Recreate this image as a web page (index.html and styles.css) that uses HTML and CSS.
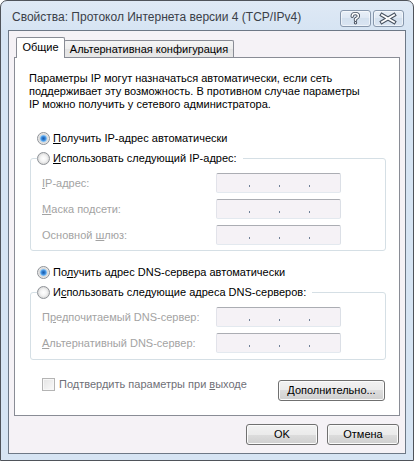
FILE: index.html
```html
<!DOCTYPE html>
<html lang="ru">
<head>
<meta charset="utf-8">
<title>Свойства: Протокол Интернета версии 4 (TCP/IPv4)</title>
<link rel="stylesheet" href="styles.css">
</head>
<body>
<div class="window">
  <div class="titlebar">
    <div class="title">Свойства: Протокол Интернета версии 4 (TCP/IPv4)</div>
    <div class="tbtns">
      <div class="tbtn">
        <svg width="31" height="17" viewBox="0 0 31 17">
          <path d="M12.2 6.2 C12.2 4.3 13.6 3.6 15.3 3.6 C17.1 3.6 18.4 4.5 18.4 6 C18.4 7.5 17.2 8 16 8.6 L15.5 9 L15.5 10.3" fill="none" stroke="#4a5462" stroke-width="3.4" stroke-linecap="round" stroke-linejoin="round"/>
          <circle cx="15.5" cy="12.8" r="1.7" fill="#4a5462"/>
          <path d="M12.2 6.2 C12.2 4.3 13.6 3.6 15.3 3.6 C17.1 3.6 18.4 4.5 18.4 6 C18.4 7.5 17.2 8 16 8.6 L15.5 9 L15.5 10.3" fill="none" stroke="#ffffff" stroke-width="1.5" stroke-linecap="round" stroke-linejoin="round"/>
          <circle cx="15.5" cy="12.8" r="0.7" fill="#ffffff"/>
        </svg>
      </div>
      <div class="tbtn">
        <svg width="31" height="17" viewBox="0 0 31 17">
          <path d="M9 5 L21 12 M21 5 L9 12" fill="none" stroke="#4a5462" stroke-width="4" stroke-linecap="square"/>
          <path d="M9 5 L21 12 M21 5 L9 12" fill="none" stroke="#ffffff" stroke-width="1.9" stroke-linecap="square"/>
        </svg>
      </div>
    </div>
  </div>

  <div class="client">
    <div class="tabs">
      <div class="tab tab-active">Общие</div>
      <div class="tab tab-inactive">Альтернативная конфигурация</div>
    </div>

    <div class="panel">
      <p class="desc">Параметры IP могут назначаться автоматически, если сеть<br>поддерживает эту возможность. В противном случае параметры<br>IP можно получить у сетевого администратора.</p>

      <div class="rrow rrow-first">
        <span class="radio radio-on"></span>
        <span class="rlabel"><u>П</u>олучить IP-адрес автоматически</span>
      </div>
      <fieldset class="group">
        <legend class="legend">
          <div class="rrow rrow-legend">
            <span class="radio"></span>
            <span class="rlabel"><u>И</u>спользовать следующий IP-адрес:</span>
          </div>
        </legend>
        <div class="field">
          <span class="flabel"><u>I</u>P-адрес:</span>
          <span class="ipbox"><i class="dot"></i><i class="dot"></i><i class="dot"></i></span>
        </div>
        <div class="field">
          <span class="flabel"><u>М</u>аска подсети:</span>
          <span class="ipbox"><i class="dot"></i><i class="dot"></i><i class="dot"></i></span>
        </div>
        <div class="field">
          <span class="flabel">Основной <u>ш</u>люз:</span>
          <span class="ipbox"><i class="dot"></i><i class="dot"></i><i class="dot"></i></span>
        </div>
      </fieldset>

      <div class="rrow rrow-dns">
        <span class="radio radio-on"></span>
        <span class="rlabel">По<u>л</u>учить адрес DNS-сервера автоматически</span>
      </div>
      <fieldset class="group group-dns">
        <legend class="legend">
          <div class="rrow rrow-legend">
            <span class="radio"></span>
            <span class="rlabel">И<u>с</u>пользовать следующие адреса DNS-серверов:</span>
          </div>
        </legend>
        <div class="field">
          <span class="flabel">П<u>р</u>едпочитаемый DNS-сервер:</span>
          <span class="ipbox"><i class="dot"></i><i class="dot"></i><i class="dot"></i></span>
        </div>
        <div class="field">
          <span class="flabel"><u>А</u>льтернативный DNS-сервер:</span>
          <span class="ipbox"><i class="dot"></i><i class="dot"></i><i class="dot"></i></span>
        </div>
      </fieldset>

      <div class="checkrow">
        <div class="check">
          <span class="checkbox"></span>
          <span class="clabel">Подтвердить параметры при <u>в</u>ыходе</span>
        </div>
        <div class="btn btn-adv"><span><u>Д</u>ополнительно...</span></div>
      </div>
    </div>

    <div class="footer">
      <div class="btn btn-dlg">OK</div>
      <div class="btn btn-dlg">Отмена</div>
    </div>
  </div>
</div>
</body>
</html>
```

FILE: styles.css
```css
* {
  box-sizing: border-box;
}

html,
body {
  margin: 0;
  padding: 0;
}

body {
  width: 414px;
  height: 461px;
  overflow: hidden;
  background: #ffffff;
  font-family: "Liberation Sans", Arial, sans-serif;
  font-size: 11px;
  color: #000000;
}

u {
  text-decoration: underline;
  text-underline-offset: 1px;
}

.window {
  width: 414px;
  height: 461px;
  border: 1px solid #4f535a;
  border-radius: 7px 7px 0 0;
  background: linear-gradient(#dfe9f5, #d6e4f3 30px, #d6e4f3);
  padding: 0 7px 6px 7px;
  display: flex;
  flex-direction: column;
}

/* ---------- title bar ---------- */
.titlebar {
  height: 29px;
  flex: none;
  display: flex;
  justify-content: space-between;
  padding: 0 2px 0 4px;
}

.title {
  padding-top: 8px;
  line-height: 16px;
  font-size: 12px;
  color: #3a4048;
  white-space: nowrap;
}

.tbtns {
  display: flex;
  gap: 2px;
  margin-top: 9px;
}

.tbtn {
  width: 31px;
  height: 17px;
  border: 1px solid #8797ac;
  border-radius: 3px;
  background: linear-gradient(#e9f0f8, #dde7f3 50%, #d3e0ee 50%, #dae5f2);
  box-shadow: inset 0 0 0 1px rgba(255, 255, 255, 0.55);
  display: flex;
  align-items: center;
  justify-content: center;
  overflow: hidden;
}

.tbtn svg {
  display: block;
  flex: none;
  margin: -1px;
}

/* ---------- client area ---------- */
.client {
  height: 424px;
  flex: none;
  border: 1px solid #6d7886;
  background: #f5f2f6;
  padding: 6px 5px 0 5px;
  display: flex;
  flex-direction: column;
}

.tabs {
  position: relative;
  z-index: 1;
  display: flex;
  align-items: flex-end;
  height: 21px;
  margin: 0 0 -1px 2px;
}

.tab {
  border: 1px solid #898c95;
  border-bottom: none;
  text-align: center;
  white-space: nowrap;
}

.tab-active {
  position: relative;
  z-index: 2;
  width: 49px;
  height: 21px;
  background: #ffffff;
  padding-top: 3px;
  line-height: 13px;
  border-radius: 2px 2px 0 0;
}

.tab-inactive {
  width: 170px;
  height: 17px;
  margin: 0 0 1px -1px;
  background: linear-gradient(#f5f5f5, #ededed 50%, #e3e3e3 51%, #e8e8e8);
  padding-top: 1px;
  line-height: 14px;
  border-radius: 2px 2px 0 0;
}

.panel {
  height: 359px;
  flex: none;
  border: 1px solid #898c95;
  background: #ffffff;
  padding: 14px 13px 0 14px;
}

.desc {
  margin: 0;
  line-height: 13px;
  white-space: nowrap;
}

/* ---------- radios ---------- */
.rrow {
  display: flex;
  align-items: center;
  gap: 3px;
  height: 20px;
  padding-left: 8px;
  white-space: nowrap;
}

.rrow-first {
  margin-top: 17px;
}

.rrow-dns {
  margin-top: 11px;
}

.rrow-legend {
  padding-left: 0;
}

.radio {
  flex: none;
  width: 13px;
  height: 13px;
  border-radius: 50%;
  border: 1px solid #8e9297;
  background: radial-gradient(circle at 50% 50%, #ffffff 0, #f4f4f4 3px, #dcdcdc 5.5px);
}

.radio-on {
  background: radial-gradient(circle at 50% 50%, #1c5ea8 0, #2f7bd0 1.6px, #64acec 2.8px, #a5d2f7 3.4px, #d8d8d8 4px, #eeeeee 5.5px);
}

/* ---------- group boxes ---------- */
.group {
  margin: 0 0 0 1px;
  padding: 5px 0 5px 6px;
  border: 1px solid #d5dfe5;
  border-radius: 3px;
  min-width: 0;
}

.group-dns {
  padding-bottom: 6px;
}

.legend {
  padding: 0 6px 0 0;
}

.field {
  display: flex;
  align-items: center;
  height: 20px;
  padding-left: 5px;
  color: #a3a3a3;
}

.field + .field {
  margin-top: 6px;
}

.flabel {
  width: 174px;
  flex: none;
  white-space: nowrap;
}

.ipbox {
  width: 125px;
  height: 20px;
  flex: none;
  border: 1px solid;
  border-color: #abadb3 #dbdfe6 #e3e9ef #e2e3ea;
  border-radius: 2px;
  background: #f5f2f6;
  display: flex;
  align-items: flex-end;
  gap: 29px;
  padding: 0 0 5px 32px;
}

.dot {
  display: block;
  width: 1px;
  height: 2px;
  background: #6f8097;
}

/* ---------- checkbox row ---------- */
.checkrow {
  display: flex;
  justify-content: space-between;
  align-items: flex-start;
  margin-top: 18px;
  padding-left: 13px;
  padding-right: 1px;
}

.check {
  display: flex;
  align-items: center;
  gap: 4px;
  height: 13px;
  white-space: nowrap;
}

.checkbox {
  width: 13px;
  height: 13px;
  flex: none;
  border: 1px solid #b4b4b4;
  background: linear-gradient(135deg, #e4e4e4, #fafafa);
  box-shadow: inset 0 0 0 1px #f7f7f7;
}

.clabel {
  color: #6f7077;
  line-height: 13px;
}

/* ---------- buttons ---------- */
.btn {
  height: 21px;
  border: 1px solid #707070;
  border-radius: 3px;
  background: linear-gradient(#f2f2f2 0, #ebebeb 50%, #dddddd 50%, #cfcfcf 100%);
  box-shadow: inset 0 0 0 1px #fbfbfb;
  display: flex;
  align-items: center;
  justify-content: center;
  white-space: nowrap;
  line-height: 13px;
}

.btn-adv {
  width: 107px;
  margin-top: 2px;
}

.footer {
  display: flex;
  justify-content: flex-end;
  gap: 9px;
  margin-top: 8px;
  padding-right: 1px;
}

.btn-dlg {
  width: 72px;
}
```
